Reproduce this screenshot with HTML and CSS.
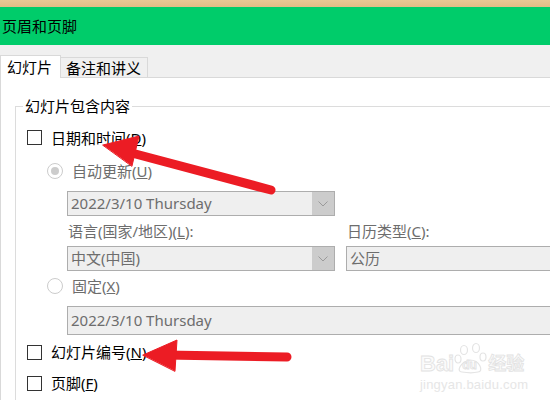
FILE: index.html
```html
<!DOCTYPE html>
<html lang="zh-CN">
<head>
<meta charset="utf-8">
<title>页眉和页脚</title>
<link rel="stylesheet" href="styles.css">
</head>
<body>
<div class="strip"></div>
<div class="titlebar">页眉和页脚</div>
<div class="tabbar">
  <div class="tab active">幻灯片</div>
  <div class="tab">备注和讲义</div>
</div>
<div class="panel">
  <fieldset class="group">
    <legend>幻灯片包含内容</legend>
    <div class="row check-row r-date"><span class="box"></span><span>日期和时间(<u>D</u>)</span></div>
    <div class="row radio-row r-auto dis"><span class="radio checked"></span><span>自动更新(<u>U</u>)</span></div>
    <div class="combo c-date"><span class="val">2022/3/10 Thursday</span><span class="drop"><svg width="10" height="6" viewBox="0 0 10 6"><polyline points="0.5,0.5 5,5 9.5,0.5" fill="none" stroke="#9a9a9a" stroke-width="1"/></svg></span></div>
    <div class="labels dis"><span class="lab1">语言(国家/地区)(<u>L</u>):</span><span class="lab2">日历类型(<u>C</u>):</span></div>
    <div class="combo-row">
      <div class="combo"><span class="val">中文(中国)</span><span class="drop"><svg width="10" height="6" viewBox="0 0 10 6"><polyline points="0.5,0.5 5,5 9.5,0.5" fill="none" stroke="#9a9a9a" stroke-width="1"/></svg></span></div>
      <div class="textbox cal">公历</div>
    </div>
    <div class="row radio-row r-fixed dis"><span class="radio"></span><span>固定(<u>X</u>)</span></div>
    <div class="textbox fixed">2022/3/10 Thursday</div>
    <div class="row check-row r-num"><span class="box"></span><span>幻灯片编号(<u>N</u>)</span></div>
    <div class="row check-row r-foot"><span class="box"></span><span>页脚(<u>F</u>)</span></div>
  </fieldset>
</div>

<div class="watermark">
  <div class="wm-top"><span class="wm-bai">Bai</span><span class="wm-paw"><svg width="34" height="34" viewBox="0 0 34 34"><g fill="none" stroke="#e4e4e4" stroke-width="1.2"><ellipse cx="10" cy="8" rx="3.5" ry="4.5"/><ellipse cx="22" cy="6" rx="3.5" ry="4.5"/><ellipse cx="4" cy="17" rx="3" ry="4"/><ellipse cx="29" cy="15" rx="3" ry="4"/><path d="M8 30 C2 30 6 20 16 18 C26 18 30 30 24 30 C20 31 14 31 8 30 Z"/></g></svg><span class="wm-du">du</span></span><span class="wm-jy">经验</span></div>
  <div class="wm-url">jingyan.baidu.com</div>
</div>

<svg class="arrows" width="550" height="400" viewBox="0 0 550 400">
  <g fill="#ec1c24" stroke="#ec1c24" stroke-linecap="round">
    <line x1="271" y1="190" x2="128" y2="152" stroke-width="9"/>
    <polygon points="103,145 139,136 132,166" stroke-width="1" stroke-linejoin="round"/>
    <line x1="287" y1="357" x2="165" y2="355" stroke-width="9"/>
    <polygon points="143,355 177,340 175,371" stroke-width="1" stroke-linejoin="round"/>
  </g>
</svg>
</body>
</html>
```

FILE: styles.css
```css
html, body {
  margin: 0;
  padding: 0;
}
body {
  width: 550px;
  height: 400px;
  overflow: hidden;
  position: relative;
  background: #ffffff;
  font-family: "Noto Sans", "Noto Sans CJK SC", sans-serif;
  font-size: 15px;
  color: #000;
}
.strip {
  height: 7px;
  background: linear-gradient(180deg, #e9c895 0%, #e3bd86 100%);
}
.titlebar {
  height: 38px;
  line-height: 38px;
  background: #00cc6a;
  padding-left: 2px;
  font-size: 15px;
  color: #000;
}
.tabbar {
  height: 32px;
  background: #f0f0f0;
  border-bottom: 1px solid #d9d9d9;
  display: flex;
  align-items: flex-end;
}
.tab {
  box-sizing: border-box;
  height: 20px;
  line-height: 20px;
  border: 1px solid #d9d9d9;
  border-bottom: none;
  padding: 0 5px 0 5px;
  width: 87px;
  border-left: none;
}
.tab.active {
  width: 61px;
  height: 23px;
  line-height: 23px;
  background: #fff;
  border-left: 1px solid #d9d9d9;
  padding-left: 6px;
  margin-bottom: -1px;
}
.panel {
  border-left: 1px solid #d9d9d9;
  height: 330px;
  overflow: hidden;
}
.group {
  margin: 18px -60px 0 14px;
  padding: 0;
  border: 1px solid #dcdcdc;
  min-width: 0;
}
.group legend {
  margin-left: 7px;
  padding: 0 2px;
  line-height: 20px;
  height: 20px;
}
.row {
  display: flex;
  align-items: center;
  line-height: 22px;
  height: 22px;
}
.check-row {
  margin-left: 11px;
  gap: 9px;
}
.radio-row {
  margin-left: 31px;
  gap: 9px;
}
.dis {
  color: #6d6d6d;
}
.box {
  width: 13px;
  height: 13px;
  border: 1px solid #333;
  background: #fff;
  flex: none;
}
.radio {
  box-sizing: border-box;
  width: 16px;
  height: 16px;
  border: 1px solid #cccccc;
  border-radius: 50%;
  background: #fff;
  flex: none;
  display: flex;
  align-items: center;
  justify-content: center;
}
.radio.checked::after {
  content: "";
  width: 8px;
  height: 8px;
  border-radius: 50%;
  background: #cccccc;
}
.r-date { margin-top: 10px; height: 23px; }
.r-auto { margin-top: 11px; }
.combo {
  box-sizing: border-box;
  width: 268px;
  height: 25px;
  border: 1px solid #adadad;
  background: #efefef;
  display: flex;
  color: #6d6d6d;
}
.combo .val {
  flex: 1;
  padding-left: 3px;
  line-height: 23px;
}
.combo .drop {
  width: 22px;
  background: #cccccc;
  display: flex;
  align-items: center;
  justify-content: center;
}
.c-date {
  margin: 9px 0 0 51px;
}
.labels {
  margin: 4px 0 0 52px;
  display: flex;
  height: 22px;
  line-height: 22px;
}
.lab1 { width: 279px; }
.combo-row {
  margin: 4px 0 0 51px;
  display: flex;
  gap: 11px;
}
.textbox {
  box-sizing: border-box;
  border: 1px solid #adadad;
  background: #efefef;
  color: #6d6d6d;
  padding-left: 3px;
}
.cal {
  width: 260px;
  height: 25px;
  line-height: 23px;
}
.r-fixed { margin-top: 4px; }
.fixed {
  margin: 9px 0 0 51px;
  width: 540px;
  height: 29px;
  line-height: 27px;
}
.r-num { margin-top: 6px; }
.r-foot { margin-top: 9px; margin-bottom: 20px; }

.watermark {
  position: absolute;
  left: 420px;
  top: 338px;
  width: 110px;
  color: #fbfbfb;
  -webkit-text-stroke: 0.8px #e2e2e2;
  font-family: "Liberation Sans", "Noto Sans CJK SC", sans-serif;
}
.wm-top {
  display: flex;
  align-items: flex-end;
  height: 38px;
}
.wm-bai {
  font-size: 22px;
  font-weight: bold;
  line-height: 24px;
}
.wm-paw {
  position: relative;
  width: 34px;
  height: 34px;
}
.wm-du {
  position: absolute;
  left: 8px;
  top: 16px;
  font-size: 12px;
  font-weight: bold;
}
.wm-jy {
  font-size: 18px;
  font-weight: bold;
  line-height: 24px;
}
.wm-url {
  font-size: 13px;
  line-height: 18px;
  letter-spacing: 0.2px;
  -webkit-text-stroke: 0;
  color: #e6e6e6;
}
.arrows {
  position: absolute;
  left: 0;
  top: 0;
}
```
